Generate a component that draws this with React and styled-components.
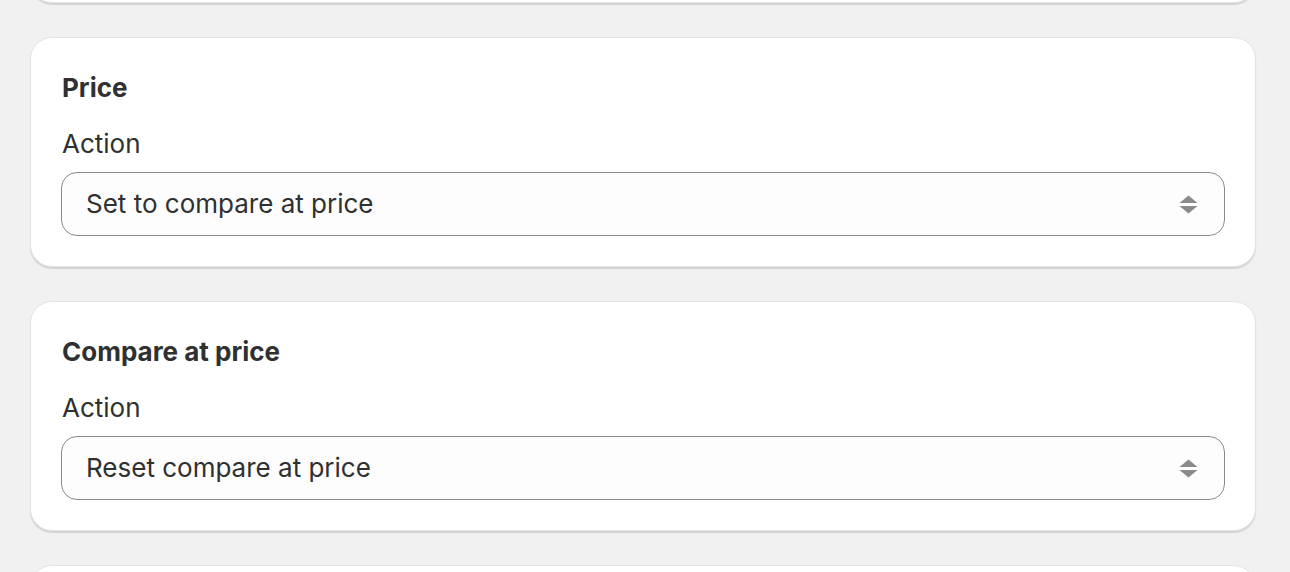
import React from 'react'
import styled, { createGlobalStyle } from 'styled-components'

const GlobalStyle = createGlobalStyle`
  html, body {
    margin: 0;
    padding: 0;
    background: #f1f1f1;
    overflow: hidden;
  }
  body {
    font-family: 'Inter', 'Noto Sans', sans-serif;
    color: #303030;
    -webkit-font-smoothing: antialiased;
  }
`

// first and last entries only peek in at the edges, so they render as bare cards
const sections = [
  { id: 'status' },
  { id: 'price', title: 'Price', value: 'Set to compare at price' },
  { id: 'compare', title: 'Compare at price', value: 'Reset compare at price' },
  { id: 'inventory' },
]

const SelectArrows = () => (
  <svg width="20" height="24" viewBox="0 0 20 24" aria-hidden="true">
    <path d="M9.5 3.5 L18.5 11 H0.5 Z" fill="#8a8a8a" />
    <path d="M9.5 21.5 L18.5 14 H0.5 Z" fill="#8a8a8a" />
  </svg>
)

const ActionCard = ({ title, value }) => (
  <Card>
    {title && (
      <>
        <CardTitle>{title}</CardTitle>
        <Field>
          <Label>Action</Label>
          <Select>
            <SelectText>{value}</SelectText>
            <SelectArrows />
          </Select>
        </Field>
      </>
    )}
  </Card>
)

const App = () => {
  return (
    <>
      <GlobalStyle />
      <Viewport>
        <Page>
          {sections.map((s) => (
            <ActionCard key={s.id} title={s.title} value={s.value} />
          ))}
        </Page>
      </Viewport>
    </>
  )
}

const Viewport = styled.div`
  height: 572px;
  overflow: hidden;
`

const Page = styled.div`
  display: flex;
  flex-direction: column;
  gap: 34px;
  margin-top: -227px;
  padding: 0 34px 0 30px;
`

const Card = styled.section`
  box-sizing: border-box;
  height: 230px;
  flex-shrink: 0;
  background: #ffffff;
  border: 1px solid #e3e3e3;
  border-radius: 22px;
  box-shadow: 0 2px 1px rgba(0, 0, 0, 0.12);
  padding: 30px 30px 31px;
  display: flex;
  flex-direction: column;
  gap: 16px;
`

const CardTitle = styled.h2`
  margin: 0;
  padding-left: 1px;
  font-size: 26px;
  line-height: 40px;
  font-weight: 650;
  color: #303030;
`

const Field = styled.div`
  display: flex;
  flex-direction: column;
  gap: 8px;
`

const Label = styled.div`
  padding-left: 1px;
  font-size: 26px;
  line-height: 40px;
  font-weight: 400;
  color: #303030;
`

const Select = styled.div`
  box-sizing: border-box;
  height: 64px;
  display: flex;
  align-items: center;
  justify-content: space-between;
  padding: 0 25px 0 24px;
  background: #fdfdfd;
  border: 1px solid #8a8a8a;
  border-radius: 16px;
`

const SelectText = styled.span`
  font-size: 26px;
  line-height: 40px;
  font-weight: 400;
  color: #303030;
`

export default App
